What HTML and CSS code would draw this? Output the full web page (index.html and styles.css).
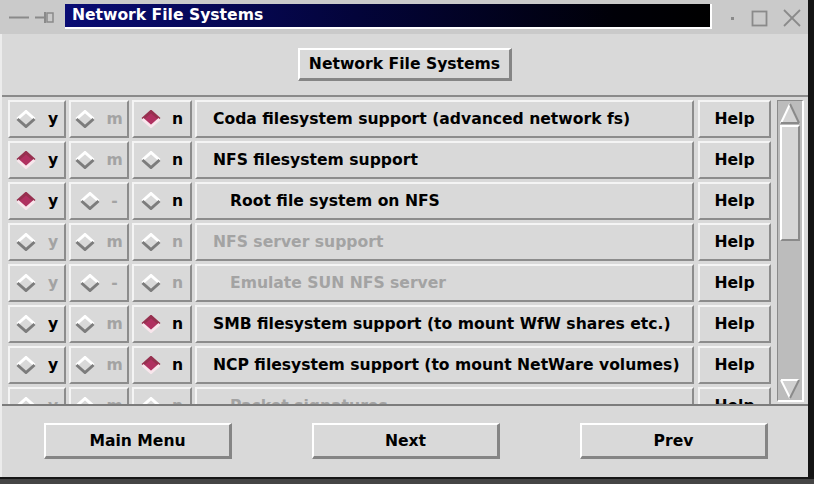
FILE: index.html
```html
<!DOCTYPE html>
<html>
<head>
<meta charset="utf-8">
<link rel="stylesheet" href="styles.css">
</head>
<body>
<svg class="defs" width="0" height="0">
  <symbol id="off" viewBox="0 0 20 18">
    <polygon points="10,1.5 18.5,9 10,16.5 1.5,9" fill="#d9d9d9"/>
    <polyline points="1.5,9 10,1.5 18.5,9" fill="none" stroke="#ffffff" stroke-width="3"/>
    <polyline points="1.5,9 10,16.5 18.5,9" fill="none" stroke="#7c7c7c" stroke-width="3"/>
  </symbol>
  <symbol id="on" viewBox="0 0 20 18">
    <polygon points="10,1.5 18.5,9 10,16.5 1.5,9" fill="#b03060"/>
    <polyline points="1.5,9 10,1.5 18.5,9" fill="none" stroke="#96304f" stroke-width="3"/>
    <polyline points="1.5,9 10,16.5 18.5,9" fill="none" stroke="#f8e6ec" stroke-width="3"/>
  </symbol>
</svg>
<div class="screen">
  <div class="window">
    <div class="titlebar">
      <div class="tb-left">
        <svg width="56" height="34" viewBox="0 0 56 34">
          <line x1="9" y1="17.5" x2="29" y2="17.5" stroke="#8a8a8a" stroke-width="2"/>
          <line x1="35" y1="17.5" x2="44" y2="17.5" stroke="#8a8a8a" stroke-width="2"/>
          <line x1="45" y1="12" x2="45" y2="23" stroke="#8a8a8a" stroke-width="2"/>
          <rect x="47" y="13" width="6" height="9" fill="none" stroke="#8a8a8a" stroke-width="1.5"/>
        </svg>
      </div>
      <div class="title">Network File Systems</div>
      <div class="tb-right">
        <svg width="96" height="34" viewBox="0 0 96 34">
          <rect x="19" y="17" width="3" height="3" fill="#8a8a8a"/>
          <rect x="40.5" y="11.5" width="14" height="14" fill="none" stroke="#8a8a8a" stroke-width="1.8"/>
          <line x1="72" y1="10" x2="88" y2="26" stroke="#8a8a8a" stroke-width="1.8"/>
          <line x1="88" y1="10" x2="72" y2="26" stroke="#8a8a8a" stroke-width="1.8"/>
        </svg>
      </div>
    </div>

    <div class="header">
      <div class="btn head-btn">Network File Systems</div>
    </div>

    <div class="list">
      <div class="rows">
        <div class="row">
          <div class="cell opt y"><svg class="dia"><use href="#off"/></svg><span>y</span></div>
          <div class="cell opt m dis"><svg class="dia"><use href="#off"/></svg><span>m</span></div>
          <div class="cell opt n"><svg class="dia"><use href="#on"/></svg><span>n</span></div>
          <div class="cell label">Coda filesystem support (advanced network fs)</div>
          <div class="cell help">Help</div>
        </div>
        <div class="row">
          <div class="cell opt y"><svg class="dia"><use href="#on"/></svg><span>y</span></div>
          <div class="cell opt m dis"><svg class="dia"><use href="#off"/></svg><span>m</span></div>
          <div class="cell opt n"><svg class="dia"><use href="#off"/></svg><span>n</span></div>
          <div class="cell label">NFS filesystem support</div>
          <div class="cell help">Help</div>
        </div>
        <div class="row">
          <div class="cell opt y"><svg class="dia"><use href="#on"/></svg><span>y</span></div>
          <div class="cell opt m dis"><svg class="dia"><use href="#off"/></svg><span>-</span></div>
          <div class="cell opt n"><svg class="dia"><use href="#off"/></svg><span>n</span></div>
          <div class="cell label sub">Root file system on NFS</div>
          <div class="cell help">Help</div>
        </div>
        <div class="row">
          <div class="cell opt y dis"><svg class="dia"><use href="#off"/></svg><span>y</span></div>
          <div class="cell opt m dis"><svg class="dia"><use href="#off"/></svg><span>m</span></div>
          <div class="cell opt n dis"><svg class="dia"><use href="#off"/></svg><span>n</span></div>
          <div class="cell label dis">NFS server support</div>
          <div class="cell help">Help</div>
        </div>
        <div class="row">
          <div class="cell opt y dis"><svg class="dia"><use href="#off"/></svg><span>y</span></div>
          <div class="cell opt m dis"><svg class="dia"><use href="#off"/></svg><span>-</span></div>
          <div class="cell opt n dis"><svg class="dia"><use href="#off"/></svg><span>n</span></div>
          <div class="cell label sub dis">Emulate SUN NFS server</div>
          <div class="cell help">Help</div>
        </div>
        <div class="row">
          <div class="cell opt y"><svg class="dia"><use href="#off"/></svg><span>y</span></div>
          <div class="cell opt m dis"><svg class="dia"><use href="#off"/></svg><span>m</span></div>
          <div class="cell opt n"><svg class="dia"><use href="#on"/></svg><span>n</span></div>
          <div class="cell label">SMB filesystem support (to mount WfW shares etc.)</div>
          <div class="cell help">Help</div>
        </div>
        <div class="row">
          <div class="cell opt y"><svg class="dia"><use href="#off"/></svg><span>y</span></div>
          <div class="cell opt m dis"><svg class="dia"><use href="#off"/></svg><span>m</span></div>
          <div class="cell opt n"><svg class="dia"><use href="#on"/></svg><span>n</span></div>
          <div class="cell label">NCP filesystem support (to mount NetWare volumes)</div>
          <div class="cell help">Help</div>
        </div>
        <div class="row">
          <div class="cell opt y dis"><svg class="dia"><use href="#off"/></svg><span>y</span></div>
          <div class="cell opt m dis"><svg class="dia"><use href="#off"/></svg><span>m</span></div>
          <div class="cell opt n dis"><svg class="dia"><use href="#off"/></svg><span>n</span></div>
          <div class="cell label sub dis">Packet signatures</div>
          <div class="cell help">Help</div>
        </div>
      </div>
      <div class="scrollbar">
        <svg class="arrow" width="22" height="23" viewBox="0 0 22 23">
          <polygon points="11,2 20,21 2,21" fill="#d4d4d4"/>
          <line x1="2" y1="21" x2="11" y2="2" stroke="#ffffff" stroke-width="2"/>
          <line x1="11" y1="2" x2="20" y2="21" stroke="#8a8a8a" stroke-width="2"/>
          <line x1="2" y1="21" x2="20" y2="21" stroke="#8a8a8a" stroke-width="2"/>
        </svg>
        <div class="slider"></div>
        <div class="trough"></div>
        <svg class="arrow" width="22" height="22" viewBox="0 0 22 22">
          <polygon points="2,2 20,2 11,20" fill="#d0d0d0"/>
          <line x1="2" y1="2" x2="20" y2="2" stroke="#ffffff" stroke-width="2"/>
          <line x1="2" y1="2" x2="11" y2="20" stroke="#ffffff" stroke-width="2"/>
          <line x1="20" y1="2" x2="11" y2="20" stroke="#8a8a8a" stroke-width="2"/>
        </svg>
      </div>
    </div>

    <div class="footer">
      <div class="btn foot-btn">Main Menu</div>
      <div class="btn foot-btn">Next</div>
      <div class="btn foot-btn">Prev</div>
    </div>
  </div>
  <div class="edge"></div>
</div>
<div class="bottom"></div>
</body>
</html>
```

FILE: styles.css
```css
* { box-sizing: border-box; }
html, body { margin: 0; padding: 0; }
body {
  width: 814px;
  height: 484px;
  overflow: hidden;
  background: #3a3a3a;
  font-family: "DejaVu Sans", "Liberation Sans", sans-serif;
  font-weight: bold;
  font-size: 15.6px;
  color: #000;
}
.defs { position: absolute; width: 0; height: 0; }

.screen { display: flex; height: 477px; }
.window {
  width: 808px;
  height: 477px;
  background: #d9d9d9;
  display: flex;
  flex-direction: column;
  border-left: 2px solid #ececec;
}
.edge { width: 6px; background: #141414; }
.bottom { height: 7px; background: #454545; border-top: 2px solid #161616; }

/* title bar */
.titlebar {
  height: 34px;
  background: #cacaca;
  display: flex;
  align-items: center;
  margin-left: -2px;
}
.tb-left { width: 65px; display: flex; }
.tb-left svg, .tb-right svg { display: block; }
.title {
  width: 648px;
  height: 25px;
  margin-top: -2px;
  padding-left: 7px;
  line-height: 23px;
  color: #fff;
  background: linear-gradient(to right, #0a0c74 0%, #03043a 45%, #000008 85%, #000 100%);
  border-right: 2px solid #fff;
  border-bottom: 2px solid #fff;
}
.tb-right { flex: 1; }

/* buttons */
.btn {
  display: flex;
  align-items: center;
  justify-content: center;
  background: #d9d9d9;
  border-style: solid;
  border-width: 2px 3px 3px 2px;
  border-color: #ffffff #858585 #858585 #ffffff;
}

/* header */
.header {
  height: 63px;
  display: flex;
  align-items: center;
  justify-content: center;
  border-bottom: 2px solid #8a8a8a;
}
.head-btn { width: 214px; height: 33px; }

/* list */
.list {
  height: 307px;
  display: flex;
  padding: 3px 0 0 6px;
  overflow: hidden;
}
.rows {
  display: flex;
  flex-direction: column;
  gap: 3px;
}
.row {
  display: flex;
  gap: 3px;
  height: 38px;
  flex-shrink: 0;
}
.cell {
  height: 38px;
  border-style: solid;
  border-width: 2px;
  border-color: #f4f4f4 #8c8c8c #8c8c8c #f4f4f4;
  display: flex;
  align-items: center;
  white-space: nowrap;
}
.opt { justify-content: center; gap: 11px; }
.opt.y { width: 58px; gap: 12px; }
.opt.m { width: 60px; }
.opt.n { width: 60px; }
.dia { width: 20px; height: 18px; display: block; flex-shrink: 0; }
.label { width: 499px; padding-left: 16px; }
.label.sub { padding-left: 33px; }
.help { width: 73px; margin-left: 1px; justify-content: center; }
.dis { color: #a3a3a3; }

/* scrollbar */
.scrollbar {
  width: 27px;
  height: 302px;
  margin-left: 6px;
  border-style: solid;
  border-width: 1px 2px 2px 1px;
  border-color: #8a8a8a #ffffff #ffffff #8a8a8a;
  background: #bcbcbc;
  display: flex;
  flex-direction: column;
  align-items: center;
  padding-top: 1px;
}
.arrow { display: block; flex-shrink: 0; }
.slider {
  width: 20px;
  height: 116px;
  flex-shrink: 0;
  background: #d6d6d6;
  border-style: solid;
  border-width: 2px;
  border-color: #ffffff #8a8a8a #8a8a8a #ffffff;
}
.trough { flex: 1; }

/* footer */
.footer {
  flex: 1;
  display: flex;
  gap: 80px;
  padding: 17px 0 0 42px;
  border-top: 2px solid #7c7c7c;
}
.foot-btn { width: 188px; height: 36px; }
```
